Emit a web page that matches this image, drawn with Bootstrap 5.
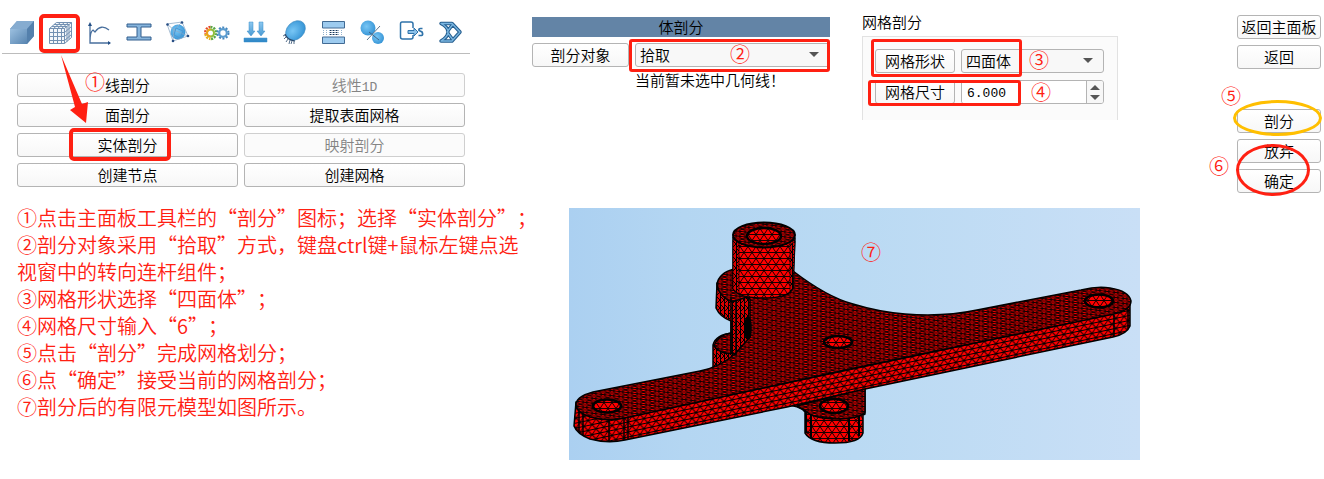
<!DOCTYPE html>
<html lang="zh-CN">
<head>
<meta charset="utf-8">
<meta name="viewport" content="width=device-width, initial-scale=1">
<title>实体剖分</title>
<link href="https://cdn.jsdelivr.net/npm/bootstrap@5.3.0/dist/css/bootstrap.min.css" rel="stylesheet">
<style>
:root { --mark: #ff2012; }
body { font-family: "Noto Sans CJK SC", sans-serif; font-size: 15px; line-height: 20px; font-weight: 350; color: #000; background: #fff; text-spacing-trim: space-all; }
.page-grid { display: grid; grid-template-columns: minmax(0, 532fr) minmax(0, 792fr); }
.panel-grid { display: grid; grid-template-columns: 330fr 375fr 87fr; height: 208px; }
.toolbar-row { margin: 12px 62px 0 2px; height: 42px; border-bottom: 1px solid #bcbcbc; }
.tool { flex: 1 1 0; height: 41px; padding: 0; border: 0; background: none; display: flex; align-items: center; justify-content: center; }
.tool .icon { width: 26px; height: 26px; display: block; }
.command-grid { display: grid; grid-template-columns: 1fr 1fr; gap: 6px; margin: 19px 67px 0 17px; }
.tbtn { height: 24px; width: 100%; padding: 0; font-size: 15px; line-height: 22px; font-weight: 350; color: #000; border: 1px solid #b4b4b4; border-radius: 3px; background: linear-gradient(#fff, #f7f7f7); white-space: nowrap; }
.tbtn:disabled { color: #848484; border-color: #cfcfcf; opacity: 1; background: #fbfbfb; }
.mono { font-family: "Liberation Mono", monospace; font-size: 13px; }
.steps { margin: 17px 0 0 17px; font-size: 20px; line-height: 27px; color: var(--mark); white-space: nowrap; }
.head-bar { height: 20px; margin-top: 17px; background: #6384a6; text-align: center; }
.pick-row { display: grid; grid-template-columns: 97px 1fr; gap: 6px; margin-top: 6px; }
.pick-note { padding-left: 103px; padding-top: 3px; }
.pick { border-color: #b4b4b4; border-radius: 3px; height: 24px; min-height: 0; padding: 0 20px 0 4px; font-size: 15px; line-height: 22px; font-weight: 350; color: #000; background-color: #f8f8f8; background-image: url("data:image/svg+xml,%3Csvg xmlns='http://www.w3.org/2000/svg' viewBox='0 0 10 6'%3E%3Cpath d='M0 0h10L5 5z' fill='%23555'/%3E%3C/svg%3E"); background-size: 10px 6px; background-position: right 10px center; }
.group-title { margin-top: 12px; line-height: 20px; }
.group-box { height: 84px; margin-right: 119px; margin-top: 4px; padding: 12px 13px 0 12px; border: 1px solid #e2e2e2; border-bottom: 0; background: #fbfbfb; }
.prop-row { display: grid; grid-template-columns: 80px 1fr; gap: 6px; margin-bottom: 7px; }
.spin { height: 24px; border: 1px solid #b4b4b4; border-radius: 3px; background: #fff; overflow: hidden; }
.spin input { min-width: 0; border: 0; padding: 3px 5px 0; flex: 1; color: #000; }
.spin-keys { width: 17px; border-left: 1px solid #b4b4b4; background: #f7f7f7; }
.spin-keys button { flex: 1; border: 0; padding: 0; background: none; display: flex; align-items: center; justify-content: center; }
.side { padding-right: 3px; padding-top: 15px; }
.side-group { display: grid; gap: 6px; margin-bottom: 40px; }
.frame { position: absolute; border: 3px solid var(--mark); border-radius: 3px; pointer-events: none; z-index: 2; }
.num { position: absolute; color: var(--mark); font-size: 20px; line-height: 24px; z-index: 3; }
.f-tool { left: -2px; top: 2px; width: 41px; height: 39px; border-width: 4px; border-radius: 5px; }
.f-solid { left: 52px; top: -5px; width: 102px; height: 33px; border-width: 4px; border-radius: 5px; }
.f-pick { left: 97px; right: 0; top: -4px; height: 33px; }
.f-shape { left: -4px; top: -10px; width: 151px; height: 38px; }
.f-size { left: -7px; top: 0; width: 153px; height: 26px; }
.arrow { position: absolute; left: 17px; top: 41px; width: 34px; height: 72px; z-index: 2; pointer-events: none; }
.n1 { left: 68px; top: -3px; } .n2 { left: 198px; top: -1px; } .n3 { left: 154px; top: -1px; } .n4 { left: 156px; top: 0; }
.n5 { left: -16px; top: -25px; } .n6 { left: -28px; top: 15px; }
.ring { position: absolute; border: 3px solid #ffbf00; border-radius: 50%; z-index: 2; pointer-events: none; }
.r-cut { left: -4px; right: -1px; top: -9px; height: 36px; }
.r-ok { left: -1px; right: 11px; top: 5px; height: 52px; border-color: var(--mark); }
.viewport3d { margin-left: 37px; margin-right: 184px; }
.viewport3d svg { display: block; width: 100%; height: auto; }
.n7 { left: 292px; top: 32px; }
</style>
</head>
<body>
<svg width="0" height="0" class="position-absolute" aria-hidden="true">
  <defs>
    <linearGradient id="steel" x1="0" y1="0" x2="1" y2="1"><stop offset="0" stop-color="#9cc0e0"/><stop offset="1" stop-color="#5784b0"/></linearGradient>
    <radialGradient id="ball" cx=".4" cy=".4" r=".7"><stop offset="0" stop-color="#78c6f5"/><stop offset="1" stop-color="#2f8fd2"/></radialGradient>
    <linearGradient id="drop" x1="0" y1="0" x2="0" y2="1"><stop offset="0" stop-color="#8cc8f0"/><stop offset="1" stop-color="#2c86c6"/></linearGradient>
  </defs>
</svg>
<main class="page-grid">
  <section>
    <div class="toolbar-row d-flex" role="toolbar">
      <button class="tool" type="button" aria-label="几何"><svg class="icon" viewBox="0 0 26 26"><path d="M1 9 8 1h17v15l-7 8H1z" fill="#6f9bc6"/><path d="M1 9 8 1h17l-7 8z" fill="#86acd0"/><path d="M18 9 25 1v15l-7 8z" fill="#5480ac"/><path d="M1 9h17v15H1z" fill="url(#steel)"/></svg></button>
      <div class="tool position-relative"><button class="tool" type="button" aria-label="剖分"><svg class="icon" viewBox="0 0 26 26"><path d="M1 8 8 2h16v15l-7 7H1z" fill="#f4f7fa"/><path d="M1.500 8.500h15v15h-15zM1.500 12.500h15M1.500 16.500h15M1.500 20.500h15M5.500 8.500v15M9.500 8.500v15M13.500 8.500v15M1.500 8.500l7-6h15l-7 6M4 6.500h15v15M6 4.500h15v15M23.500 2.500v15l-7 6M5.500 8.500l7-6M9.500 8.500l7-6M13.500 8.500l7-6M16.500 12.500l7-6M16.500 16.500l7-6M16.500 20.500l7-6" fill="none" stroke="#7391b2" stroke-width="1"/></svg></button><span class="frame f-tool"></span>
        <svg class="arrow" viewBox="58 54 34 72"><path d="M61 56 75 108 70 111 86 124 88 103 82 105Z" fill="#ff2012"/></svg></div>
      <button class="tool" type="button" aria-label="曲线"><svg class="icon" viewBox="0 0 26 26" fill="none" stroke="#486f9d" stroke-width="1.300"><path d="M3 4v19h20M3 22c0-8 1-11 3-12l2 2c4-6 9-6 14-2"/><path d="m1 6 2-4 2 4zM21 21l3 2-3 2z" fill="#234f86" stroke="none"/></svg></button>
      <button class="tool" type="button" aria-label="截面"><svg class="icon" viewBox="0 0 26 26"><path d="M1 4h24v3H15v10h10v3H1v-3h10V7H1z" fill="#86b4dc" stroke="#335f8e"/></svg></button>
      <button class="tool" type="button" aria-label="材料"><svg class="icon" viewBox="0 0 26 26"><circle cx="13" cy="12" r="7.500" fill="url(#ball)"/><path d="M2 4 17 2l6 14L8 21zM2 4l7 6 8-8M9 10l-1 11M9 10l14 6" fill="none" stroke="#8fabc6" stroke-width=".8"/><path d="M11 8l7 3-3 7-6-3z" fill="none" stroke="#4d98d2"/><g fill="#294f85"><circle cx="2.500" cy="4.500" r="1.300"/><circle cx="17" cy="2.500" r="1.300"/><circle cx="23" cy="16" r="1.300"/><circle cx="8" cy="21" r="1.300"/></g></svg></button>
      <button class="tool" type="button" aria-label="属性"><svg class="icon" viewBox="0 0 26 26" fill="none"><g stroke-width="2.500" stroke-dasharray="2 1"><path d="M6.500 7a5.500 5.500 0 0 0-5 7" stroke="#e84a27"/><path d="M1.500 14a5.500 5.500 0 0 0 5 5" stroke="#e6b01c"/><path d="M6.500 7a5.500 6 0 0 1 0 12" stroke="#59a846"/></g><circle cx="6.500" cy="13" r="3.500" stroke="#8fbf3a" stroke-width="2"/><path d="M6.500 9.500a3.500 3.500 0 0 0 0 7" stroke="#f0a01c" stroke-width="2"/><circle cx="19" cy="13" r="5.500" stroke="#4486bd" stroke-width="2" stroke-dasharray="2 1.500"/><circle cx="19" cy="13" r="3.800" stroke="#5b9ccf" stroke-width="2.200"/></svg></button>
      <button class="tool" type="button" aria-label="载荷"><svg class="icon" viewBox="0 0 26 26" fill="url(#drop)" stroke="#3b8dc8" stroke-width=".5"><path d="M6 2h4v9h2l-4 5-4-5h2zM16 2h4v9h2l-4 5-4-5h2zM1 18h23v4H1z"/></svg></button>
      <button class="tool" type="button" aria-label="约束"><svg class="icon" viewBox="0 0 26 26"><ellipse cx="13.500" cy="10.500" rx="11" ry="8.500" transform="rotate(-45 13.500 10.500)" fill="url(#ball)" stroke="#3685bd" stroke-width=".6"/><path d="M3 14q2 6 10 7" fill="none" stroke="#294669" stroke-width="1.200"/><path d="m3 15-2 1m3 1-2 2m4 0-2 3m4-2-1 4m3-3-1 3m3-3v3" stroke="#425f7e" stroke-width=".9"/></svg></button>
      <button class="tool" type="button" aria-label="接触"><svg class="icon" viewBox="0 0 26 26"><path d="M1.500 1.500h22v6.500h-22zM1.500 17h22v6.500h-22z" fill="#9dcbef" stroke="#426b94"/><path d="M2 10.500h21M2 12.500h21M2 14.500h21" stroke="#91b1ce" stroke-dasharray="1 2"/><path d="M9 10.500h8M9 12.500h8M9 14.500h8" stroke="#1b3553" stroke-dasharray="1.500 1.500"/></svg></button>
      <button class="tool" type="button" aria-label="连接"><svg class="icon" viewBox="0 0 26 26"><circle cx="8" cy="8" r="7.500" fill="url(#ball)"/><circle cx="18" cy="18" r="6" fill="url(#ball)"/><path d="m7 20 13-14M9 12l10 8" stroke="#37536f" stroke-width=".8"/></svg></button>
      <button class="tool" type="button" aria-label="求解"><svg class="icon" viewBox="0 0 26 26" fill="none" stroke="#2f73aa" stroke-width="1.500"><path d="M14 8V4q0-2-2-2H3Q1.500 2 1.500 4v13q0 2 2 2h8.500q2 0 2-2v-2"/><path d="M9 10.500h6V8l4 4-4 4v-2.500H9z" fill="#8bc0e8" stroke-width="1"/><path d="M23.500 8.500h-2q-2 0-1.500 2l3 1.500q1.500 3-.5 3.500h-3" stroke-width="1.700"/></svg></button>
      <button class="tool" type="button" aria-label="优化"><svg class="icon" viewBox="0 0 26 26" fill="none" stroke-linejoin="round"><g stroke="#255e8f" stroke-width="3.500"><path d="M3 3.500h11l8 8.500-8 9H3q7-4 7-9T3 3.500zM9 12l6-8M9 12l6 8"/></g><g stroke="#79b5e0" stroke-width="1.300"><path d="M3 3.500h11l8 8.500-8 9H3q7-4 7-9T3 3.500zM9 12l6-8M9 12l6 8"/></g></svg></button>
    </div>
    <div class="command-grid">
      <div class="position-relative"><button class="tbtn" type="button">线剖分</button><span class="num n1">①</span></div>
      <button class="tbtn" type="button" disabled>线性<span class="mono">1D</span></button>
      <button class="tbtn" type="button">面剖分</button>
      <button class="tbtn" type="button">提取表面网格</button>
      <div class="position-relative"><button class="tbtn" type="button">实体剖分</button><span class="frame f-solid"></span></div>
      <button class="tbtn" type="button" disabled>映射剖分</button>
      <button class="tbtn" type="button">创建节点</button>
      <button class="tbtn" type="button">创建网格</button>
    </div>
    <div class="steps">
      <div>①点击主面板工具栏的“剖分”图标；选择“实体剖分”；</div>
      <div>②剖分对象采用“拾取”方式，键盘ctrl键+鼠标左键点选<br>视窗中的转向连杆组件；</div>
      <div>③网格形状选择“四面体”；</div>
      <div>④网格尺寸输入“6”；</div>
      <div>⑤点击“剖分”完成网格划分；</div>
      <div>⑥点“确定”接受当前的网格剖分；</div>
      <div>⑦剖分后的有限元模型如图所示。</div>
    </div>
  </section>

  <section>
    <div class="panel-grid">
      <div class="pe-4 me-2">
        <div class="head-bar">体剖分</div>
        <div class="pick-row position-relative">
          <button class="tbtn" type="button">剖分对象</button>
          <select class="form-select pick" aria-label="剖分对象"><option>拾取</option></select>
          <span class="frame f-pick"></span><span class="num n2">②</span>
        </div>
        <div class="pick-note">当前暂未选中几何线！</div>
      </div>
      <div>
        <div class="group-title">网格剖分</div>
        <div class="group-box">
          <div class="prop-row position-relative">
            <button class="tbtn" type="button">网格形状</button>
            <select class="form-select pick" aria-label="网格形状"><option>四面体</option></select>
            <span class="frame f-shape"></span><span class="num n3">③</span>
          </div>
          <div class="prop-row position-relative">
            <button class="tbtn" type="button">网格尺寸</button>
            <div class="spin d-flex">
              <input class="mono" type="text" value="6.000" aria-label="网格尺寸">
              <div class="spin-keys d-flex flex-column">
                <button type="button" aria-label="增大"><svg width="10" height="6"><path d="M0 6h10L5 1z" fill="#555"/></svg></button>
                <button type="button" aria-label="减小"><svg width="10" height="6"><path d="M0 0h10L5 5z" fill="#555"/></svg></button>
              </div>
            </div>
            <span class="frame f-size"></span><span class="num n4">④</span>
          </div>
        </div>
      </div>
      <div class="side">
        <div class="side-group">
          <button class="tbtn" type="button">返回主面板</button>
          <button class="tbtn" type="button">返回</button>
        </div>
        <div class="side-group">
          <div class="position-relative"><button class="tbtn" type="button">剖分</button><span class="ring r-cut"></span><span class="num n5">⑤</span></div>
          <div class="position-relative"><button class="tbtn" type="button">放弃</button><span class="ring r-ok"></span><span class="num n6">⑥</span></div>
          <button class="tbtn" type="button">确定</button>
        </div>
      </div>
    </div>

    <div class="viewport3d position-relative">
      <svg viewBox="569 208 571 252" role="img" aria-label="有限元模型">
        <defs>
          <linearGradient id="sky"><stop offset="0" stop-color="#abd0f1"/><stop offset=".2" stop-color="#b4d6f2"/><stop offset=".5" stop-color="#badaf3"/><stop offset="1" stop-color="#c9dff6"/></linearGradient>
          <pattern id="topMesh" width="9" height="5" patternUnits="userSpaceOnUse" patternTransform="skewY(7)"><path d="M0 0h9v5H0z" fill="#f00"/><path d="M0 .5h9M0 3h9M0 .5l4.500 2.500L9 .5M0 5.500l4.500-2.500L9 5.500" stroke="#000" stroke-width=".9" fill="none"/></pattern>
          <pattern id="sideMesh" width="8" height="10" patternUnits="userSpaceOnUse" patternTransform="skewY(-12)"><path d="M0 0h8v10H0z" fill="#f00"/><path d="M0 .5h8M0 5.500h8M0 .5l4 5 4-5M0 10.500l4-5 4 5" stroke="#000" stroke-width=".9" fill="none"/></pattern>
          <pattern id="tubeMesh" width="8" height="12" patternUnits="userSpaceOnUse"><path d="M0 0h8v12H0z" fill="#f00"/><path d="M0 .5h8M0 6.500h8M0 .5l4 6 4-6M0 12.500l4-6 4 6" stroke="#000" stroke-width=".9" fill="none"/></pattern>
          <pattern id="wallMesh" width="4" height="8" patternUnits="userSpaceOnUse"><path d="M0 0h4v8H0z" fill="#d80000"/><path d="M.5 0v8M0 0l4 4M4 4 0 8" stroke="#000" stroke-width="1" fill="none"/></pattern>
        </defs>
        <path d="M569 208h571v252H569z" fill="url(#sky)"/>
        <g stroke="#000" stroke-width="1.500" stroke-linejoin="round">
          <path d="M785 405q14 0 20 7v21q6 10 30 10 25 0 28-10v-18l2-1v-28z" fill="url(#tubeMesh)"/>
          <path d="M797 406 865 388v24q-5 7-29 7-25-1-30-8z" fill="url(#topMesh)"/>
          <ellipse cx="834" cy="406" rx="14" ry="7" fill="url(#tubeMesh)" stroke-width="2.500"/>
          <path d="M806 411v22M811 415v23M849 418v23M859 416v20" fill="none" stroke-width="2"/>
          <path d="M713 368v-23q3-11 20-12h20v32z" fill="url(#wallMesh)"/>
          <path d="M714 346q4-11 17-13h15l-5 20q-20 3-27-7z" fill="url(#topMesh)"/>
          <path d="M576 402l-2 24q3 8 16 13 18 5 35 1L787 407 865 389 1113 337q14-3 17-11v-25z" fill="url(#sideMesh)"/>
          <path d="M576 404q1-9 22-13l102-20q20-4 35-17V299L793 271q34 26 60 33 26 8 52 10 39 3 72-4l104-20q16-4 29-2 19 3 21 13 0 9-17 13L850 369 625 418q-18 4-35-1-14-5-14-13z" fill="url(#topMesh)"/>
          <path d="M717 283l-1 25q4 9 15 13v31l4 2 15-17V299l-18-7z" fill="url(#wallMesh)"/>
          <path d="M717 284q2-11 17-15l22 25-24 8q-14-6-15-18z" fill="url(#topMesh)"/>
          <path d="M731 297v57M736 300v55" fill="none"/>
          <ellipse cx="748" cy="328" rx="3" ry="11"/>
          <path d="M733 237v52q5 9 31 9 25 0 29-10l2-50z" fill="url(#tubeMesh)"/>
          <path d="M733 240h6v54l-6-5zM790 245l5-4-2 47-3 3z" fill="url(#wallMesh)" stroke-width=".7"/>
          <ellipse cx="764" cy="235" rx="31" ry="12.500" fill="url(#topMesh)" stroke-width="2"/>
          <ellipse cx="764" cy="236" rx="17" ry="8" fill="url(#tubeMesh)" stroke-width="2.500"/>
          <ellipse cx="607" cy="406" rx="14" ry="6.500" fill="url(#tubeMesh)" stroke-width="2.500"/>
          <ellipse cx="838" cy="342" rx="14" ry="6" fill="url(#tubeMesh)" stroke-width="2.500"/>
          <ellipse cx="1099" cy="301" rx="14" ry="6.500" fill="url(#tubeMesh)" stroke-width="2.500"/>
          <path d="M579 411v22M583 414v22M609 420v22M624 418v22M628 417v22M1114 315v22M1128 309v20" fill="none"/>
        </g>
      </svg>
      <span class="num n7">⑦</span>
    </div>
  </section>
</main>
<script src="https://cdn.jsdelivr.net/npm/bootstrap@5.3.0/dist/js/bootstrap.bundle.min.js"></script>
</body>
</html>
